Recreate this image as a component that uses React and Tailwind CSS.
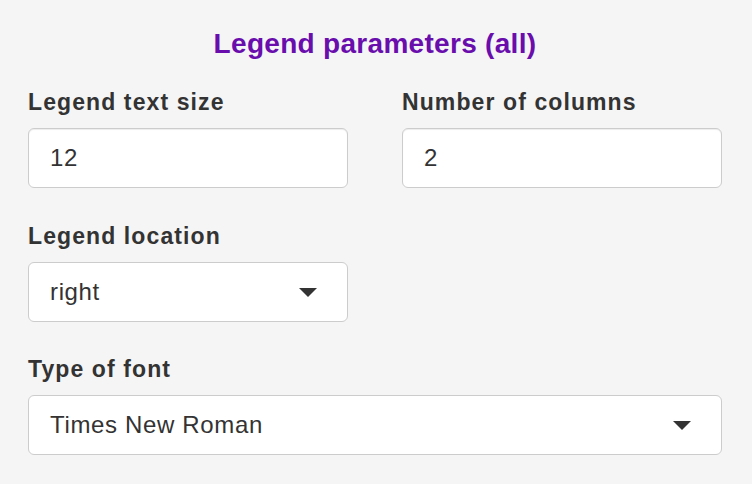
import React from "react";

const font = { fontFamily: '"Liberation Sans", Arial, Helvetica, sans-serif' };

function Caret() {
  return (
    <svg width="18" height="9" viewBox="0 0 18 9" className="shrink-0">
      <polygon points="0,0 18,0 9,9" fill="#333333" />
    </svg>
  );
}

function Label({ children, className = "" }) {
  return (
    <div className={`text-[23px] leading-[28px] font-bold text-[#333333] tracking-[1.1px] mb-[12px] ${className}`}>
      {children}
    </div>
  );
}

function TextInput({ value }) {
  return (
    <div className="h-[60px] bg-white border border-[#cccccc] rounded-[6px] shadow-[inset_0_1px_1px_rgba(0,0,0,0.075)] flex items-center pl-[21px] text-[24px] text-[#333333] tracking-[0.65px]">
      {value}
    </div>
  );
}

function Select({ value }) {
  return (
    <div className="h-[60px] bg-white border border-[#cccccc] rounded-[6px] flex items-center justify-between pl-[21px] pr-[30px] text-[24px] text-[#333333] tracking-[0.65px]">
      <span>{value}</span>
      <Caret />
    </div>
  );
}

export default function App() {
  return (
    <div style={font} className="w-full min-h-[484px] bg-[#f5f5f5] pl-[28px] pr-[30px] pt-[28px]">
      <h4 className="text-center text-[28px] leading-[32px] font-bold text-[#6a0dad] tracking-[0.3px] mb-[28px]">
        Legend parameters (all)
      </h4>
      <div className="grid grid-cols-2 gap-x-[54px]">
        <div>
          <Label>Legend text size</Label>
          <TextInput value="12" />
        </div>
        <div>
          <Label>Number of columns</Label>
          <TextInput value="2" />
        </div>
      </div>
      <div className="grid grid-cols-2 gap-x-[54px] mt-[34px]">
        <div>
          <Label className="mb-[11px]">Legend location</Label>
          <Select value="right" />
        </div>
      </div>
      <div className="mt-[33px]">
        <Label>Type of font</Label>
        <Select value="Times New Roman" />
      </div>
    </div>
  );
}
